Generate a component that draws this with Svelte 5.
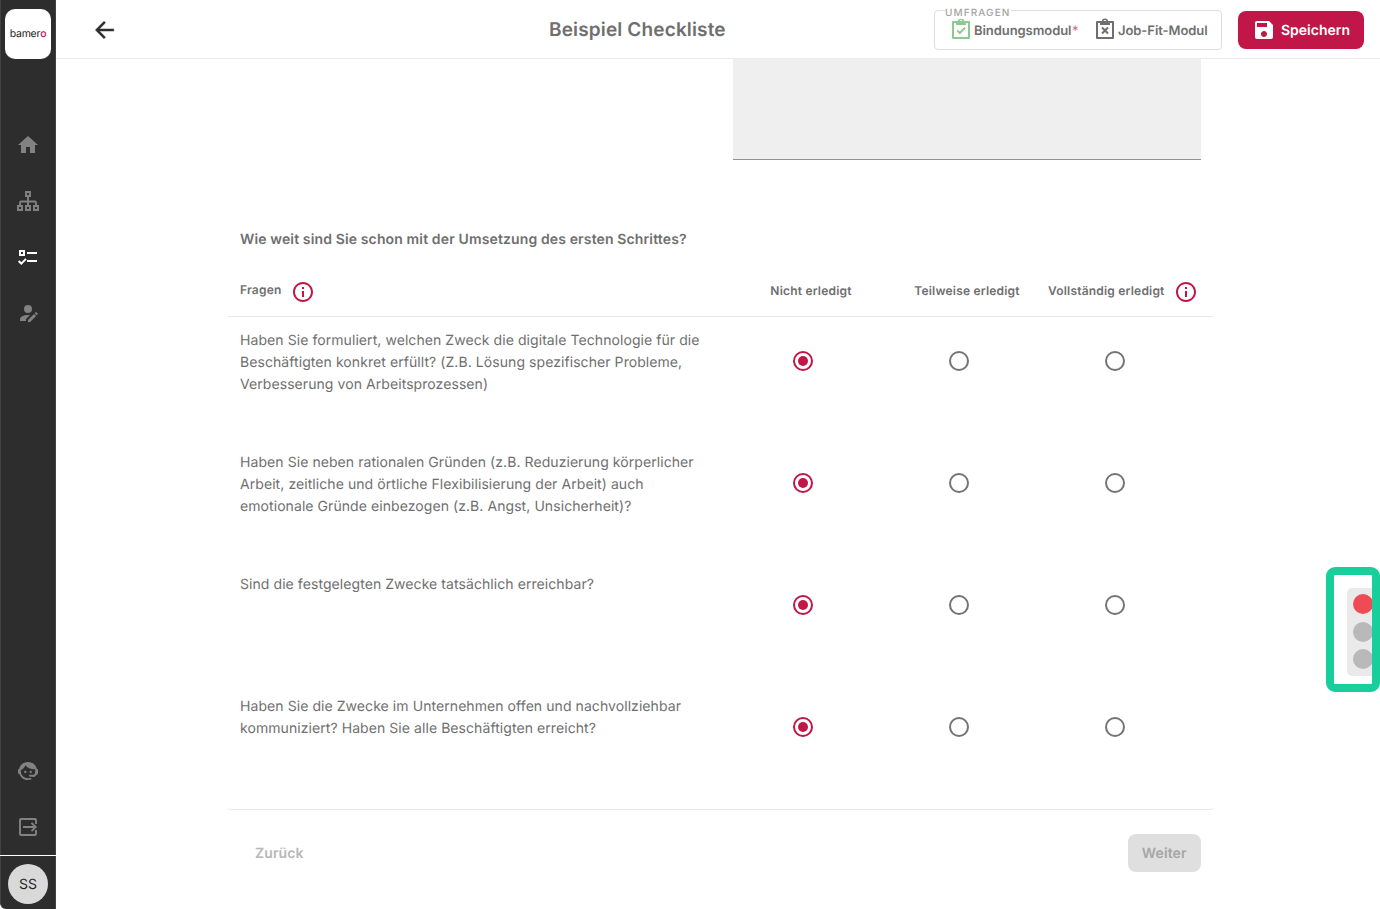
<script>
  const questions = [
    ['Haben Sie formuliert, welchen Zweck die digitale Technologie für die', 'Beschäftigten konkret erfüllt? (Z.B. Lösung spezifischer Probleme,', 'Verbesserung von Arbeitsprozessen)'],
    ['Haben Sie neben rationalen Gründen (z.B. Reduzierung körperlicher', 'Arbeit, zeitliche und örtliche Flexibilisierung der Arbeit) auch', 'emotionale Gründe einbezogen (z.B. Angst, Unsicherheit)?'],
    ['Sind die festgelegten Zwecke tatsächlich erreichbar?'],
    ['Haben Sie die Zwecke im Unternehmen offen und nachvollziehbar', 'kommuniziert? Haben Sie alle Beschäftigten erreicht?']
  ];
  let answers = $state([0, 0, 0, 0]);
</script>

{#snippet info()}
  <svg class="info" viewBox="0 0 24 24"><path d="M11 7h2v2h-2zm0 4h2v6h-2zm1-9C6.48 2 2 6.48 2 12s4.48 10 10 10 10-4.48 10-10S17.52 2 12 2zm0 18c-4.41 0-8-3.59-8-8s3.59-8 8-8 8 3.59 8 8-3.59 8-8 8z" /></svg>
{/snippet}

{#snippet clipboard(mark)}
  <svg class="clip" viewBox="0 0 20 22">
    <g fill="none" stroke="currentColor" stroke-width="2">
      <path d="M2 4h16v16H2z" stroke-linejoin="round" />
      <path d="M5 4h10v3H5z" fill="currentColor" stroke="none" />
      <path d="M7.7 3.4a2.3 2.1 0 0 1 4.6 0" stroke-width="1.6" />
      <path d={mark} />
    </g>
  </svg>
{/snippet}

<div class="app">
  <nav class="sidebar">
    <div class="logo"><span>bamer<b>o</b></span></div>
    <div class="menu">
      <svg viewBox="0 0 24 24"><path d="M10 20v-6h4v6h5v-8h3L12 3 2 12h3v8z" /></svg>
      <svg viewBox="0 0 24 24"><g fill="none" stroke="currentColor" stroke-width="1.9"><path d="M10 3h4v4h-4zM2 17h4v4H2zM10 17h4v4h-4zM18 17h4v4h-4zM12 7v10M4 17v-3.2q0-1.3 1.3-1.3h13.4q1.3 0 1.3 1.3V17" /></g></svg>
      <svg class="active" viewBox="0 0 24 24"><path fill="none" stroke="currentColor" stroke-width="2" d="M4 6h4v4H4zM11 8h10M11 16h10M2.7 16l2.6 2.6L10 13.9" /></svg>
      <svg viewBox="0 0 24 24"><path d="M21.7,13.35L20.7,14.35L18.65,12.3L19.65,11.3C19.86,11.09 20.21,11.09 20.42,11.3L21.7,12.58C21.91,12.79 21.91,13.14 21.7,13.35M12,18.94L18.07,12.88L20.12,14.93L14.06,21H12V18.94M12,14C7.58,14 4,15.79 4,18V20H10V18.11L14,14.11C13.34,14.03 12.67,14 12,14M12,4A4,4 0 0,0 8,8A4,4 0 0,0 12,12A4,4 0 0,0 16,8A4,4 0 0,0 12,4Z" /></svg>
    </div>
    <div class="menu lower">
      <svg viewBox="0 0 24 24"><path d="M18.72,14.76C19.07,13.91 19.26,13 19.26,12C19.26,11.28 19.15,10.59 18.96,9.95C18.31,10.1 17.63,10.18 16.92,10.18C13.86,10.18 11.15,8.67 9.5,6.34C8.61,8.5 6.91,10.26 4.77,11.22C4.73,11.47 4.73,11.74 4.73,12A7.27,7.27 0 0,0 12,19.27C13.05,19.27 14.06,19.04 14.97,18.63C15.54,19.72 15.8,20.26 15.78,20.26C14.14,20.81 12.87,21.08 12,21.08C9.58,21.08 7.27,20.13 5.57,18.42C4.53,17.38 3.76,16.11 3.33,14.73H2V10.18H3.09C3.93,6.04 7.6,2.92 12,2.92C14.4,2.92 16.71,3.87 18.42,5.58C19.69,6.84 20.54,8.45 20.89,10.18H22V14.73H21.94L18.38,18L13.08,17.4V15.73H17.91L18.72,14.76M9.27,11.77C9.57,11.77 9.86,11.89 10.07,12.11C10.28,12.32 10.4,12.61 10.4,12.91C10.4,13.21 10.28,13.5 10.07,13.71C9.86,13.92 9.57,14.04 9.27,14.04C8.64,14.04 8.13,13.54 8.13,12.91C8.13,12.28 8.64,11.77 9.27,11.77M14.72,11.77C15.35,11.77 15.85,12.28 15.85,12.91C15.85,13.54 15.35,14.04 14.72,14.04C14.09,14.04 13.58,13.54 13.58,12.91A1.14,1.14 0 0,1 14.72,11.77Z" /></svg>
      <svg viewBox="0 0 24 24"><path fill="none" stroke="currentColor" stroke-width="1.9" d="M20 9V5q0-1-1-1H5q-1 0-1 1v14q0 1 1 1h14q1 0 1-1v-4M7 12h12.5M15.5 7.8l4.2 4.2-4.2 4.2" /></svg>
    </div>
    <div class="user"><div class="avatar">SS</div></div>
  </nav>

  <div class="page">
    <header>
      <svg class="back" viewBox="0 0 24 24"><path d="M21 11H7.83l5.59-5.59L12 4l-8 8 8 8 1.41-1.41L7.83 13H21z" stroke="#2d2d2d" stroke-width=".4" /></svg>
      <h1>Beispiel Checkliste</h1>
      <div class="surveys">
        <span class="legend">UMFRAGEN</span>
        <span class="survey done">{@render clipboard('M6.2 12.4l2.6 2.6 5.2-5.4')}</span>
        <span class="binding">Bindungsmodul</span><span class="star">*</span>
        <span class="survey">{@render clipboard('M7 9.5l6 6M13 9.5l-6 6')}</span>
        <span class="job">Job-Fit-Modul</span>
      </div>
      <button class="save">
        <svg viewBox="0 0 24 24"><path d="M17 3H5c-1.11 0-2 .9-2 2v14c0 1.1.89 2 2 2h14c1.1 0 2-.9 2-2V7l-4-4zm-5 16c-1.66 0-3-1.34-3-3s1.34-3 3-3 3 1.34 3 3-1.34 3-3 3zm3-10H5V5h10v4z" /></svg>
        <span>Speichern</span>
      </button>
    </header>

    <main>
      <div class="field"></div>
      <h2>Wie weit sind Sie schon mit der Umsetzung des ersten Schrittes?</h2>
      <section>
        <div class="row head">
          <div class="first"><span>Fragen</span>{@render info()}</div>
          <div class="col">Nicht erledigt</div>
          <div class="col">Teilweise erledigt</div>
          <div class="last"><span>Vollständig erledigt</span>{@render info()}</div>
        </div>
        {#each questions as lines, q}
          <div class="row">
            <p>{#each lines as line}<span>{line}</span>{/each}</p>
            {#each [0, 1, 2] as option}
              <button class="radio" class:on={answers[q] === option} aria-label="Option" onclick={() => (answers[q] = option)}>
                <svg viewBox="0 0 20 20"><circle cx="10" cy="10" r="9" fill="none" stroke="currentColor" stroke-width="2" />{#if answers[q] === option}<circle cx="10" cy="10" r="5" />{/if}</svg>
              </button>
            {/each}
          </div>
        {/each}
      </section>
      <footer>
        <button class="prev">Zurück</button>
        <button class="next">Weiter</button>
      </footer>
    </main>
  </div>

  <aside><div class="lights"><i class="red"></i><i></i><i></i></div></aside>
</div>

<style>
  :global(body) { margin: 0; background: #fff; overflow: hidden; }
  .app { box-sizing: border-box; position: relative; display: flex; width: 1380px; height: 909px; overflow: hidden; font-family: Inter, sans-serif; color: #6f6f6f; text-rendering: geometricPrecision; }
  button { border: 0; background: none; padding: 0; font: inherit; color: inherit; letter-spacing: inherit; text-rendering: inherit; }
  svg { display: block; fill: currentColor; flex: none; }
  .sidebar { box-sizing: border-box; width: 56px; height: 909px; flex: none; display: flex; flex-direction: column; align-items: center; background: #2d2d2d; border-left: 1px solid #414141; border-right: 1px solid #414141; border-bottom-left-radius: 6px; color: #828282; }
  .logo { width: 46px; height: 50px; margin-top: 9px; border-radius: 10px; background: #fff; display: flex; align-items: center; justify-content: center; color: #222; font-size: 10.5px; line-height: 12px; letter-spacing: -.25px; }
  .logo b { font-weight: 500; color: #c41847; }
  .menu { display: flex; flex-direction: column; gap: 32px; margin-top: 74px; }
  .menu svg { width: 24px; height: 24px; }
  .menu .active { color: #fff; }
  .lower { margin-top: auto; margin-bottom: 16px; }
  .user { width: 56px; height: 53px; border-top: 1px solid #fff; display: flex; justify-content: center; }
  .avatar { width: 40px; height: 40px; margin-top: 8px; border-radius: 50%; background: #d9d9d9; color: #222; display: flex; align-items: center; justify-content: center; font-size: 14px; }
  .page { flex: 1; min-width: 0; display: flex; flex-direction: column; }
  header { box-sizing: border-box; height: 59px; flex: none; border-bottom: 1px solid #ebebeb; display: flex; align-items: center; padding: 2px 16px 0 36px; }
  .back { width: 26px; height: 26px; color: #2d2d2d; margin-left: -1px; }
  h1 { margin: 0 0 0 432px; width: 385px; font-size: 19px; line-height: 24px; font-weight: 600; letter-spacing: .15px; white-space: nowrap; }
  .surveys { box-sizing: border-box; position: relative; width: 288px; height: 40px; border: 1px solid #dedede; border-radius: 4px; display: flex; align-items: center; padding-left: 16px; font-size: 13px; line-height: 16px; font-weight: 600; letter-spacing: -.07px; white-space: nowrap; }
  .legend { position: absolute; left: 10px; top: -4px; height: 12px; background: #fff; font-size: 10px; line-height: 12px; font-weight: 500; letter-spacing: 1.1px; color: #a3a3a3; }
  .clip { width: 20px; height: 22px; margin-bottom: 2px; }
  .done { color: #8bcb8f; }
  .binding { margin-left: 3px; width: 98px; padding-top: 2px; }
  .star { width: 23px; padding-top: 2px; color: #d8668a; font-weight: 400; }
  .job { margin-left: 3px; padding-top: 2px; }
  .save { width: 126px; height: 38px; margin-left: 16px; border-radius: 8px; background: #c01748; color: #fff; display: flex; align-items: center; padding-left: 14px; font-size: 14px; font-weight: 600; letter-spacing: 0; }
  .save svg { width: 24px; height: 24px; margin-right: 5px; }
  main { width: 987px; margin-left: 171px; display: flex; flex-direction: column; }
  .field { box-sizing: border-box; width: 468.5px; height: 101px; margin-left: 505.5px; background: #efefef; border-bottom: 1px solid #939393; }
  h2 { margin: 70px 0 0 13px; font-size: 14px; line-height: 20px; font-weight: 600; letter-spacing: .13px; }
  section { box-sizing: border-box; height: 560px; border-bottom: 1px solid #e9e9e9; border-radius: 4px; }
  .row { display: grid; grid-template-columns: 497px 155px 157px 156px; height: 122px; margin-left: 1px; width: 985px; }
  .head { box-sizing: border-box; height: 67px; border-bottom: 1px solid #e9e9e9; font-size: 12px; line-height: 16px; font-weight: 600; letter-spacing: .2px; white-space: nowrap; }
  .first { display: flex; padding: 30px 0 0 12px; gap: 10px; }
  .info { width: 24px; height: 24px; color: #c01748; }
  .col { padding: 33px 0 0 17px; text-align: center; }
  .last { display: flex; padding: 33px 0 0 11px; gap: 9px; }
  .last .info { margin-top: -3px; }
  .first .info { margin-top: -.5px; }
  .first span { margin-top: 2px; }
  p { margin: 13px 0 0 12px; font-size: 14px; line-height: 22px; letter-spacing: .07px; }
  p span { display: block; white-space: nowrap; }
  .radio { align-self: start; justify-self: center; width: 20px; height: 20px; margin-top: 34px; color: #747474; }
  .radio.on { color: #c01748; }
  footer { display: flex; justify-content: space-between; padding: 24px 13px 0 28px; font-size: 14px; font-weight: 600; letter-spacing: .1px; color: #b7b7b7; }
  .next { width: 73.5px; height: 38px; border-radius: 8px; background: #dfdfdf; color: #a6a6a6; }
  aside { box-sizing: border-box; position: absolute; left: 1326px; top: 567px; width: 54px; height: 125px; border: 8px solid #18cf9c; border-radius: 9px; background: #fff; overflow: hidden; }
  .lights { box-sizing: border-box; width: 40px; height: 88px; margin: 13px 0 0 13px; padding: 6px; border-radius: 5px; background: #eaeaea; display: flex; flex-direction: column; gap: 7.5px; }
  .lights i { width: 20px; height: 20px; flex: none; border-radius: 50%; background: #b9b9b9; }
  .lights .red { background: #ee4b55; }
</style>
